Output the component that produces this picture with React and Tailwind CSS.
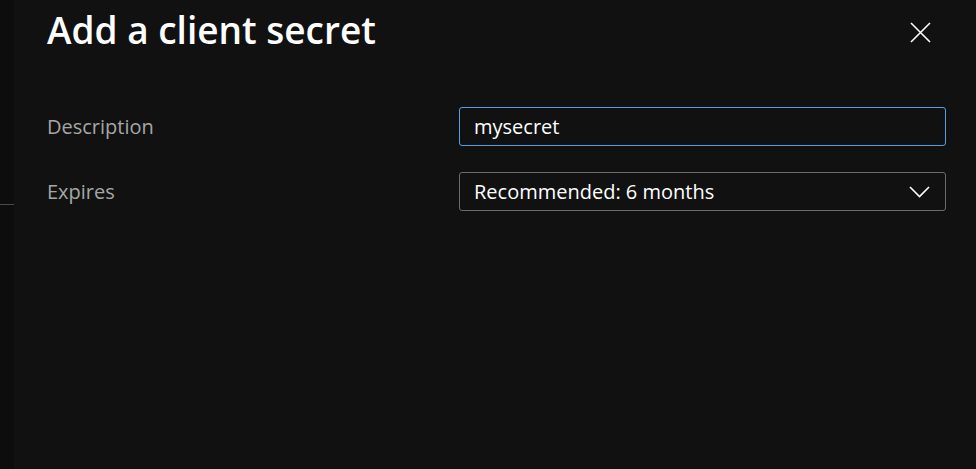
import React from "react";

export default function App() {
  return (
    <div className="flex h-[469px] w-[976px] overflow-hidden bg-[#111111]" style={{ fontFamily: '"Open Sans", "Noto Sans", sans-serif' }}>
      <div className="flex w-[14px] shrink-0 flex-col bg-[#0d0d0d]">
        <div className="h-[204px]" />
        <div className="h-px bg-[#4a4a4a]" />
      </div>
      <div className="flex flex-1 flex-col pl-[33px] pr-[30px]">
        <div className="flex h-[66px] items-start justify-between">
          <h1 className="mt-[5px] text-[37px] font-semibold leading-[50px] text-white">Add a client secret</h1>
          <button className="mt-[22px] mr-[15px] flex h-[21px] w-[21px] items-center justify-center text-white">
            <svg width="21" height="21" viewBox="0 0 21 21" fill="none" stroke="currentColor" strokeWidth="1.6">
              <path d="M1 1L20 20M20 1L1 20" />
            </svg>
          </button>
        </div>
        <div className="mt-[41px] flex items-center">
          <div className="w-[412px] text-[20px] text-[#a6a6a6]">Description</div>
          <div className="flex h-[39px] flex-1 items-center rounded-[3px] border border-[#4ea1e6] px-[14px] text-[20px] text-white">mysecret</div>
        </div>
        <div className="mt-[26px] flex items-center">
          <div className="w-[412px] text-[20px] text-[#a6a6a6]">Expires</div>
          <div className="flex h-[39px] flex-1 items-center justify-between rounded-[3px] border border-[#6b6b6b] pl-[14px] pr-[15px] text-[20px] text-white">
            <span>Recommended: 6 months</span>
            <svg width="21" height="12" viewBox="0 0 21 12" fill="none" stroke="currentColor" strokeWidth="1.6">
              <path d="M1 1L10.5 10.5L20 1" />
            </svg>
          </div>
        </div>
      </div>
    </div>
  );
}
